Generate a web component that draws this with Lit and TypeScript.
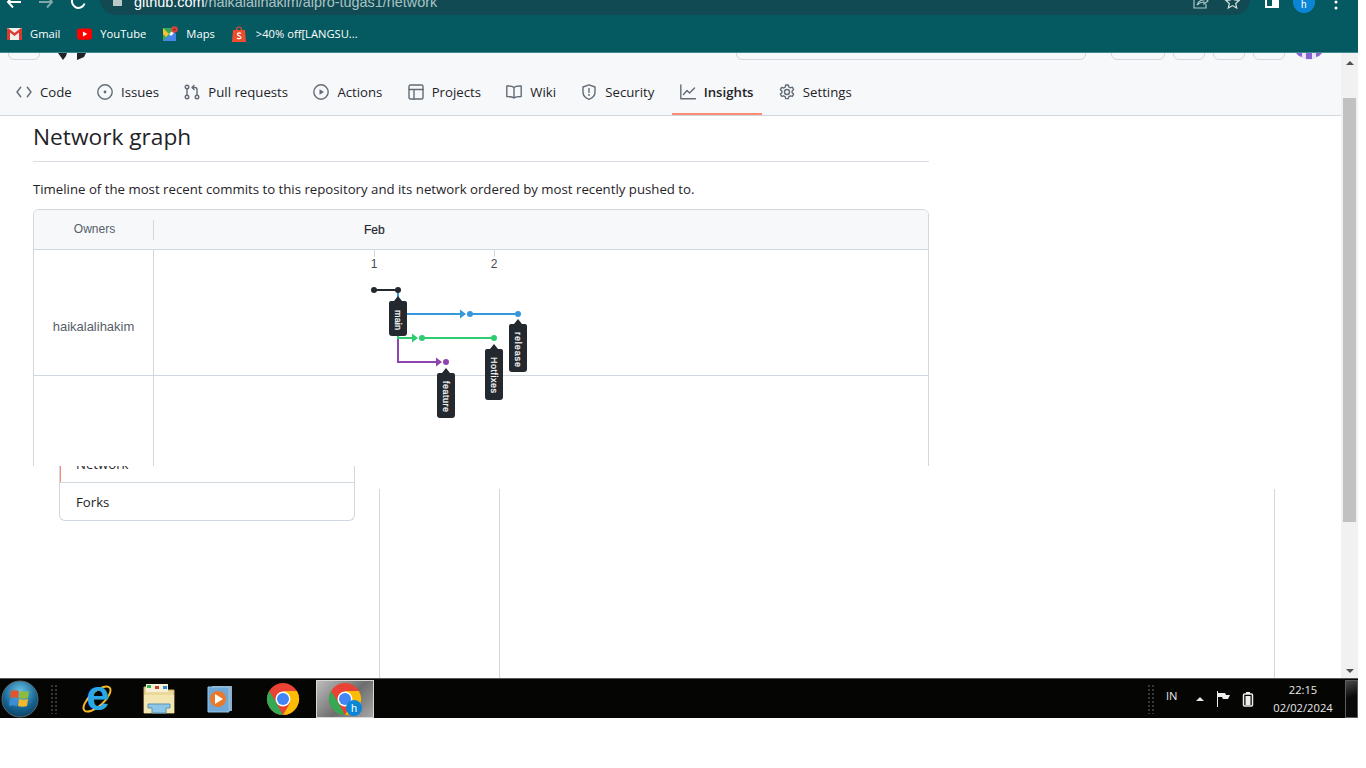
import { LitElement, html, css, svg } from "lit"
import { customElement } from "lit/decorators.js"

const tabs = [
    { label: "Code", icon: svg`<path d="M4.7 3.2 1 8l3.7 4.8M11.3 3.2 15 8l-3.7 4.8"/>` },
    { label: "Issues", icon: svg`<circle cx="8" cy="8" r="7.2"/><circle cx="8" cy="8" r="1.4" fill="#636c76" stroke="none"/>` },
    { label: "Pull requests", icon: svg`<circle cx="3" cy="3" r="1.8"/><circle cx="3" cy="13" r="1.8"/><circle cx="13" cy="13" r="1.8"/><path d="M3 5v6M13 11V5.5A2 2 0 0 0 11 3.500H8.500M10 1.500 8 3.500l2 2"/>` },
    { label: "Actions", icon: svg`<circle cx="8" cy="8" r="7.2"/><path d="M6.500 5.200v5.600L11 8z" fill="#636c76" stroke="none"/>` },
    { label: "Projects", icon: svg`<rect x="1" y="1" width="14" height="14" rx="1.500"/><path d="M1 5.500h14M6 5.500V15"/>` },
    { label: "Wiki", icon: svg`<path d="M8 3.500C6.500 2 4 1.800 .8 2v10.500c3 0 5.500 0 7.200 1.500 1.700-1.500 4.200-1.500 7.200-1.500V2C12 1.800 9.500 2 8 3.500zM8 3.500V14"/>` },
    { label: "Security", icon: svg`<path d="M8 .8 14 3v5c0 3.500-2.500 6-6 7.300C4.500 14 2 11.500 2 8V3z"/><path d="M8 4.500v4"/><circle cx="8" cy="11" r=".9" fill="#636c76" stroke="none"/>` },
    { label: "Insights", active: true, icon: svg`<path d="M.8 1v13.700H15.500M3.500 10.500 7 6.500l2.500 2.500 5-5"/>` },
    { label: "Settings", icon: svg`<circle cx="8" cy="8" r="2.500"/><path d="M6.700 1h2.600l.5 2 1.500.8 2-.6 1.300 2.300-1.500 1.400v1.800l1.500 1.400-1.300 2.300-2-.6-1.500.8-.5 2H6.700l-.5-2-1.500-.8-2 .6-1.300-2.300 1.500-1.400V7.100L1.400 5.700l1.300-2.300 2 .6 1.500-.8z"/>` },
]

// a branch label on the graph, a dark tag with text running downwards
const tag = (x: number, y: number, h: number, label: string, textTop: number, textLen: number) => svg`
    <path d="M${x} ${y} l4 5 h3 a2 2 0 0 1 2 2 v${h} a3 3 0 0 1 -3 3 h-12 a3 3 0 0 1 -3 -3 v-${h} a2 2 0 0 1 2 -2 h3 z" fill="#24292f"/>
    <text transform="translate(${x - 3.5} ${textTop}) rotate(90)" class="tag-text" textLength=${textLen} lengthAdjust="spacing">${label}</text>`

@customElement("app-root")
export class AppRoot extends LitElement {
    static styles = css`
        :host {
            display: block;
            width: 1358px;
            height: 718px;
            overflow: hidden;
            background: #fff;
            font-family: "Open Sans", "Noto Sans", sans-serif;
            color: #1f2328;
        }

        .toolbar {
            height: 15px;
            background: #045a60;
            display: flex;
            align-items: flex-end;
            overflow: hidden;
        }
        .nav-icons {
            width: 100px;
            flex: none;
            display: flex;
        }
        .nav-icons svg { display: block; }
        .omnibox {
            width: 1150px;
            height: 31px;
            border-radius: 0 0 16px 16px;
            background: #114a52;
            flex: none;
            display: flex;
            align-items: flex-end;
            padding-left: 14px;
            box-sizing: border-box;
            position: relative;
            font: 14.400px "Liberation Sans", Arial, sans-serif;
            color: #a9c4c6;
            white-space: nowrap;
        }
        .omnibox b {
            font-weight: 400;
            color: #fff;
        }
        .url {
            padding-bottom: 5px;
            padding-left: 20px;
        }
        .lock {
            position: absolute;
            left: 13px;
            bottom: 8px;
        }
        .omni-icons {
            position: absolute;
            right: 10px;
            bottom: 4px;
        }
        .right-icons {
            flex: 1;
            display: flex;
        }

        .bookmarks {
            height: 37px;
            background: #045a60;
            border-bottom: 1px solid #3d8a8f;
            display: flex;
            align-items: center;
            padding-left: 7px;
            font: 11.200px "Open Sans", sans-serif;
            color: #fff;
        }
        .bookmark {
            display: flex;
            align-items: center;
            gap: 8px;
            margin-right: 17px;
        }

        .viewport {
            height: 625px;
            display: flex;
        }
        .page {
            flex: 1;
            min-width: 0;
            display: flex;
            flex-direction: column;
        }
        .scrollbar {
            width: 17px;
            flex: none;
            background: #f1f1f1;
            display: flex;
            flex-direction: column;
            position: relative;
        }
        .thumb {
            height: 424px;
            margin: 45px 2px 0;
            background: #c1c1c1;
        }
        .arrow {
            position: absolute;
            left: 5px;
            width: 0;
            height: 0;
            border-left: 4px solid transparent;
            border-right: 4px solid transparent;
        }
        .arrow.up { top: 8px; border-bottom: 4px solid #505050; }
        .arrow.down { bottom: 5px; border-top: 4px solid #505050; }

        .header {
            height: 62px;
            flex: none;
            background: #f6f8fa;
            border-bottom: 1px solid #d0d7de;
            position: relative;
            overflow: hidden;
        }
        .stubs {
            height: 7px;
            display: flex;
            align-items: flex-end;
        }
        .stub {
            height: 14px;
            box-sizing: border-box;
            background: #f6f8fa;
            border: 1px solid #d0d7de;
            border-radius: 6px;
            flex: none;
            align-self: flex-end;
        }
        .tabs {
            display: flex;
            height: 46px;
            padding: 0 0 0 8px;
            margin-top: 9px;
            font-size: 13.200px;
            color: #1f2328;
        }
        .tab {
            display: flex;
            align-items: center;
            gap: 8px;
            padding: 0 8px;
            margin-right: 9.300px;
            height: 46px;
            box-sizing: border-box;
            white-space: nowrap;
            position: relative;
        }
        .tab svg {
            width: 16px;
            height: 16px;
            flex: none;
            fill: none;
            stroke: #636c76;
            stroke-width: 1.400;
            stroke-linecap: round;
            stroke-linejoin: round;
        }
        .tab.active { font-weight: 600; }
        .tab.active::after {
            content: "";
            position: absolute;
            left: 0;
            right: 0;
            bottom: 0;
            height: 2px;
            background: #fd8c73;
        }

        .content {
            flex: none;
            height: 350px;
            padding-left: 33px;
            overflow: hidden;
        }
        .title {
            width: 896px;
            height: 46px;
            border-bottom: 1px solid #d8dee4;
            box-sizing: border-box;
            font-size: 22.700px;
            font-weight: 400;
            line-height: 41px;
            margin: 0;
        }
        .lead {
            margin: 18px 0 11px;
            font-size: 13.220px;
            line-height: 18px;
            white-space: nowrap;
        }
        .network {
            width: 896px;
            height: 300px;
            box-sizing: border-box;
            border: 1px solid #d0d7de;
            border-radius: 6px 6px 0 0;
            position: relative;
            overflow: hidden;
            font-family: "Liberation Sans", Arial, sans-serif;
            font-size: 12px;
            color: #57606a;
        }
        .graph-head {
            height: 40px;
            box-sizing: border-box;
            background: #f6f8fa;
            border-bottom: 1px solid #d0d7de;
            display: flex;
        }
        .owners-head {
            width: 120px;
            height: 20px;
            margin-top: 10px;
            padding-left: 2px;
            box-sizing: border-box;
            border-right: 1px solid #d0d7de;
            text-align: center;
            line-height: 19px;
        }
        .month {
            margin: 13px 0 0 210px;
            color: #24292f;
            line-height: 14px;
            -webkit-text-stroke: .2px #24292f;
        }
        .graph-row {
            display: flex;
            height: 126px;
            box-sizing: border-box;
            border-bottom: 1px solid #d0d7de;
        }
        .graph-row.empty { height: 100px; border-bottom: none; }
        .owner {
            width: 120px;
            flex: none;
            box-sizing: border-box;
            border-right: 1px solid #d0d7de;
            text-align: center;
            line-height: 153px;
            font-size: 13px;
        }
        .graph {
            position: absolute;
            left: 120px;
            top: 40px;
        }
        .day {
            font: 12px "Liberation Sans", Arial, sans-serif;
            fill: #444d56;
        }
        .tag-text {
            font: 9px "Liberation Sans", Arial, sans-serif;
            fill: #fff;
            stroke: #fff;
            stroke-width: .2px;
        }

        .leftover {
            flex: 1;
            display: flex;
            min-height: 0;
        }
        .side {
            width: 296px;
            height: 55px;
            margin-left: 59px;
            box-sizing: border-box;
            border: 1px solid #d0d7de;
            border-top: none;
            border-radius: 0 0 6px 6px;
            font-size: 13.200px;
            flex: none;
            overflow: hidden;
        }
        .side-item {
            height: 16px;
            border-bottom: 1px solid #d0d7de;
            border-left: 2px solid #fd8c73;
            margin-left: -1px;
            line-height: 0;
            overflow: hidden;
            position: relative;
        }
        .side-item span {
            position: absolute;
            left: 15px;
            top: -11px;
            line-height: 18px;
        }
        .side-forks {
            padding-left: 16px;
            line-height: 38px;
        }
        .rails {
            margin: 23px 0 0 24px;
            flex: none;
            width: 896px;
            display: flex;
            box-sizing: border-box;
            border-left: 1px solid #d0d7de;
            border-right: 1px solid #d0d7de;
        }
        .rail {
            width: 120px;
            box-sizing: border-box;
            border-right: 1px solid #d0d7de;
        }

        .taskbar {
            height: 40px;
            background: #050503;
            border-top: 1px solid #55595a;
            box-sizing: border-box;
            display: flex;
            align-items: center;
            color: #e8e8e8;
            position: relative;
            overflow: hidden;
        }
        .start { width: 40px; flex: none; display: flex; justify-content: center; }
        .grip {
            width: 8px;
            height: 30px;
            margin-left: 10px;
            flex: none;
            background-image: radial-gradient(#3c3c3c 0.7px, transparent 0.8px);
            background-size: 4px 4px;
        }
        .apps {
            display: flex;
            margin-left: 10px;
            gap: 4px;
        }
        .app {
            width: 58px;
            height: 38px;
            display: flex;
            align-items: center;
            justify-content: center;
            box-sizing: border-box;
        }
        .app.on {
            background: linear-gradient(135deg, #bdbdbd, #6e6e6e 55%, #a8a8a8);
            border: 1px solid #d8d8d8;
        }
        .tray {
            margin-left: auto;
            display: flex;
            align-items: center;
            font: 11.200px "Open Sans", sans-serif;
        }
        .tray .grip { margin: 0; }
        .lang { margin-left: 11px; width: 30px; margin-top: -6px; }
        .clock {
            text-align: center;
            width: 72px;
            margin-left: 11px;
            line-height: 18px;
        }
        .show {
            width: 13px;
            height: 38px;
            margin-left: 6px;
            box-sizing: border-box;
            border: 1px solid #5c5c5c;
            background: linear-gradient(160deg, #4a4a4a, #0a0a0a 45%);
        }
    `

    render() {
        return html`
            <div class="toolbar">
                <div class="nav-icons">
                    <svg width="100" height="15" viewBox="0 0 100 15" fill="none" stroke-width="2">
                        <path d="M8 2h13M13-4 8 2l5 5.500" stroke="#fff"/>
                        <path d="M39 2h13M47-4l5 6-5 5.500" stroke="#7fa6a9"/>
                        <path d="M84 -2a6.500 6.500 0 1 0 .6 5.500" stroke="#fff"/>
                    </svg>
                </div>
                <div class="omnibox">
                    <svg class="lock" width="9" height="15" viewBox="0 0 9 15"><rect y="8" width="9" height="6" fill="#b9c9ca"/></svg>
                    <span class="url"><b>github.com</b>/haikalalihakim/alpro-tugas1/network</span>
                    <svg class="omni-icons" width="50" height="15" viewBox="0 0 50 15" fill="none" stroke="#a9c4c6" stroke-width="1.200">
                        <path d="M4 2v10h12V8M7 9c1-3 4-5 7-5V1l4 4-4 3V6c-3 0-5 1-7 3z"/>
                        <path d="M42.500 0l2 4 4.500.5-3.300 3 1 4.500-4.200-2.400-4.200 2.400 1-4.500-3.300-3 4.500-.5z" stroke="#d5e0e1"/>
                    </svg>
                </div>
                <div class="right-icons">
                    <svg width="100" height="15" viewBox="0 0 100 15" fill="none">
                        <rect x="16" y="-3" width="12" height="10" stroke="#fff" stroke-width="2"/>
                        <rect x="22" y="-3" width="6" height="10" fill="#fff"/>
                        <circle cx="54" cy="2" r="11" fill="#0b86d6"/>
                        <text x="51" y="8" font-size="10" fill="#fff" font-family="Liberation Sans">h</text>
                        <circle cx="86" cy="2" r="1.500" fill="#fff"/>
                        <circle cx="86" cy="8" r="1.500" fill="#fff"/>
                    </svg>
                </div>
            </div>

            <div class="bookmarks">
                <div class="bookmark">
                    <svg width="15" height="12" viewBox="0 0 15 12"><rect width="15" height="12" rx="1" fill="#f1efec"/><path d="M0 1v11h3V4.500L7.500 8 12 4.500V12h3V1l-1-1-6.500 5L1 0z" fill="#d93a30"/></svg>
                    Gmail
                </div>
                <div class="bookmark">
                    <svg width="15" height="12" viewBox="0 0 16 12"><rect width="16" height="12" rx="3" fill="#f00"/><path d="M6.300 3.300v5.400L11 6z" fill="#fff"/></svg>
                    YouTube
                </div>
                <div class="bookmark">
                    <svg width="15" height="15" viewBox="0 0 15 15"><path d="M0 2h10v13H0z" fill="#34a853"/><path d="M0 15 10 5l3 3v7z" fill="#4a86e8"/><path d="M0 2l6 6-3 3-3-3z" fill="#fbc02d"/><path d="M6 8l3-3 2 2-3 3z" fill="#f4f4f4"/><circle cx="11.500" cy="3.500" r="3.300" fill="#db4437"/><circle cx="11.500" cy="3.500" r="1" fill="#7c1f17"/></svg>
                    Maps
                </div>
                <div class="bookmark">
                    <svg width="14" height="16" viewBox="0 0 14 16" style="margin-right:2px"><path d="M1 4h12l1 12H0z" fill="#ee4d2d"/><path d="M4.500 4c0-4 5-4 5 0" fill="none" stroke="#ee4d2d" stroke-width="1.200"/><path d="M9 7.500C7.500 6.500 5 7 5.500 8.500S9 10 9 11.500s-3 1.500-4 .5" fill="none" stroke="#fff" stroke-width="1.200"/></svg>
                    &gt;40% off[LANGSU...
                </div>
            </div>

            <div class="viewport">
                <div class="page">
                    <div class="header">
                        <div class="stubs">
                            <div class="stub" style="width:32px;margin-left:8px"></div>
                            <svg width="30" height="7" viewBox="0 0 30 7" style="margin-left:18px"><path d="M0 0h9l-1 3-3 4zM19 0h9l-2 4-7 3z" fill="#1f2328"/></svg>
                            <div class="stub" style="width:350px;margin-left:648px"></div>
                            <div class="stub" style="width:54px;margin-left:25px"></div>
                            <div class="stub" style="width:32px;margin-left:8px"></div>
                            <div class="stub" style="width:32px;margin-left:8px"></div>
                            <div class="stub" style="width:32px;margin-left:8px"></div>
                            <svg width="30" height="7" viewBox="0 0 30 7" style="margin-left:9px">
                                <circle cx="15" cy="-8" r="15" fill="#e9e4f7"/>
                                <path d="M2 0h6v4l-3-1zM12 0h6v6h-6zM22 0h6l-3 3-3 1z" fill="#8a63d2"/>
                            </svg>
                        </div>
                        <nav class="tabs">
                            ${tabs.map(t => html`
                                <div class="tab ${t.active ? "active" : ""}">
                                    <svg viewBox="0 0 16 16">${t.icon}</svg>${t.label}
                                </div>`)}
                        </nav>
                    </div>

                    <div class="content">
                        <h2 class="title">Network graph</h2>
                        <p class="lead">Timeline of the most recent commits to this repository and its network ordered by most recently pushed to.</p>
                        <div class="network">
                            <div class="graph-head">
                                <div class="owners-head">Owners</div>
                                <div class="month">Feb</div>
                            </div>
                            <div class="graph-row">
                                <div class="owner">haikalalihakim</div>
                            </div>
                            <div class="graph-row empty">
                                <div class="owner"></div>
                            </div>
                            <svg class="graph" width="500" height="180" viewBox="0 0 500 180" fill="none">
                                <path d="M220.500 0v7M340.500 0v7" stroke="#d0d7de"/>
                                <text x="220" y="18" text-anchor="middle" class="day">1</text>
                                <text x="340" y="18" text-anchor="middle" class="day">2</text>

                                <path d="M244 88v24h38" stroke="#8e44ad" stroke-width="2"/>
                                <path d="M282 107.500l6 4.500-6 4.500z" fill="#8e44ad"/>
                                <circle cx="292" cy="112" r="3" fill="#8e44ad"/>

                                <path d="M244 40v24h62" stroke="#3498db" stroke-width="2"/>
                                <path d="M306 59.500l6 4.500-6 4.500z" fill="#3498db"/>
                                <path d="M316 64h48" stroke="#3498db" stroke-width="2"/>
                                <circle cx="316" cy="64" r="3" fill="#3498db"/>
                                <circle cx="364" cy="64" r="3" fill="#3498db"/>

                                <path d="M244 64v24h14" stroke="#2ecc71" stroke-width="2"/>
                                <path d="M258 83.500l6 4.500-6 4.500z" fill="#2ecc71"/>
                                <path d="M268 88h72" stroke="#2ecc71" stroke-width="2"/>
                                <circle cx="268" cy="88" r="3" fill="#2ecc71"/>
                                <circle cx="340" cy="88" r="3" fill="#2ecc71"/>

                                <path d="M220 40h24" stroke="#24292f" stroke-width="2"/>
                                <circle cx="220" cy="40" r="3" fill="#24292f"/>
                                <circle cx="244" cy="40" r="3" fill="#24292f"/>

                                ${tag(244, 46, 30, "main", 60, 20)}
                                ${tag(364, 69, 43, "release", 82, 35)}
                                ${tag(340, 94, 46, "Hotfixes", 107, 36)}
                                ${tag(292, 118, 40, "feature", 131, 31)}
                            </svg>
                        </div>
                    </div>

                    <div class="leftover">
                        <div class="side">
                            <div class="side-item"><span>Network</span></div>
                            <div class="side-forks">Forks</div>
                        </div>
                        <div class="rails">
                            <div class="rail"></div>
                        </div>
                    </div>
                </div>
                <div class="scrollbar">
                    <span class="arrow up"></span>
                    <div class="thumb"></div>
                    <span class="arrow down"></span>
                </div>
            </div>

            <div class="taskbar">
                <div class="start">
                    <svg width="38" height="38" viewBox="0 0 38 38">
                        <defs><radialGradient id="orb" cx=".5" cy=".3" r=".8"><stop offset="0" stop-color="#6cc5e8"/><stop offset=".6" stop-color="#14618f"/><stop offset="1" stop-color="#0b3350"/></radialGradient></defs>
                        <circle cx="19" cy="19" r="18" fill="url(#orb)" stroke="#5a6a72"/>
                        <path d="M10 11c3-1 5-1 8 0l-1 7c-3-1-5-1-8 0z" fill="#e2552b"/>
                        <path d="M19 11c3 1 6 1 9 0l-1 7c-3 1-6 1-9 0z" fill="#8dbb3c"/>
                        <path d="M9 19c3-1 5-1 8 0l-1 7c-3-1-5-1-8 0z" fill="#3c8fd6"/>
                        <path d="M18 19c3 1 6 1 9 0l-1 7c-3 1-6 1-9 0z" fill="#f2b92c"/>
                    </svg>
                </div>
                <div class="grip"></div>
                <div class="apps">
                    <div class="app">
                        <svg width="34" height="34" viewBox="0 0 34 34" fill="none">
                            <ellipse cx="17" cy="17" rx="17" ry="7" transform="rotate(-42 17 17)" stroke="#f2b92c" stroke-width="2"/>
                            <text x="18" y="28" text-anchor="middle" font-family="Liberation Sans" font-size="42" font-weight="700" fill="#2aa7e6">e</text>
                        </svg>
                    </div>
                    <div class="app">
                        <svg width="34" height="32" viewBox="0 0 34 32">
                            <path d="M2 4h12l2 3h16v23H2z" fill="#ead99a" stroke="#c9b06a"/>
                            <rect x="4" y="1" width="22" height="8" fill="#f6f0d8"/>
                            <rect x="5" y="2" width="4" height="3" fill="#31b44a"/>
                            <rect x="13" y="3" width="4" height="3" fill="#c8402f"/>
                            <rect x="21" y="3" width="4" height="3" fill="#2f87d8"/>
                            <path d="M2 12h30v18H2z" fill="#f3e6b0"/>
                            <path d="M6 21h22v4h-4v5H10v-5H6z" fill="#8ec6e6" stroke="#5b93b8"/>
                        </svg>
                    </div>
                    <div class="app">
                        <svg width="30" height="30" viewBox="0 0 30 30">
                            <path d="M6 2h20v25H6z" fill="#8fb0cc"/>
                            <path d="M2 3h21v25H2z" fill="#6fa8d6" stroke="#9cc4e0"/>
                            <circle cx="12" cy="15" r="8" fill="#e9782a"/>
                            <path d="M9 10v10l8-5z" fill="#fff"/>
                        </svg>
                    </div>
                    ${[false, true].map(on => html`
                        <div class="app ${on ? "on" : ""}">
                            <svg width="34" height="34" viewBox="0 0 34 34">
                                <circle cx="17" cy="17" r="16" fill="#ea4335"/>
                                <path d="M17 33A16 16 0 0 1 3.100 9L10 20z" fill="#34a853"/>
                                <path d="M17 33a16 16 0 0 0 13.900-24H17l7 12z" fill="#fbbc05"/>
                                <circle cx="17" cy="17" r="7.500" fill="#fff"/>
                                <circle cx="17" cy="17" r="6" fill="#4285f4"/>
                                ${on ? svg`
                                    <circle cx="26" cy="26" r="8" fill="#0b86d6"/>
                                    <text x="26" y="30" text-anchor="middle" font-family="Liberation Sans" font-size="11" fill="#fff">h</text>` : ""}
                            </svg>
                        </div>`)}
                </div>
                <div class="tray">
                    <div class="grip"></div>
                    <div class="lang">IN</div>
                    <svg width="60" height="18" viewBox="0 0 60 18">
                        <path d="M0 11l4-4 4 4z" fill="#e8e8e8"/>
                        <path d="M21.500 1v16" stroke="#eee"/>
                        <path d="M22 3h7l1 2h4l-2 4h-5l-1-2h-4z" fill="#eee"/>
                        <rect x="47.500" y="4" width="9" height="12" rx="1" fill="none" stroke="#eee" stroke-width="1.500"/>
                        <rect x="49.500" y="6" width="5" height="9" fill="#eee"/>
                        <rect x="50" y="2" width="4" height="2" fill="#eee"/>
                    </svg>
                    <div class="clock">22:15<br />02/02/2024</div>
                    <div class="show"></div>
                </div>
            </div>
        `
    }
}
